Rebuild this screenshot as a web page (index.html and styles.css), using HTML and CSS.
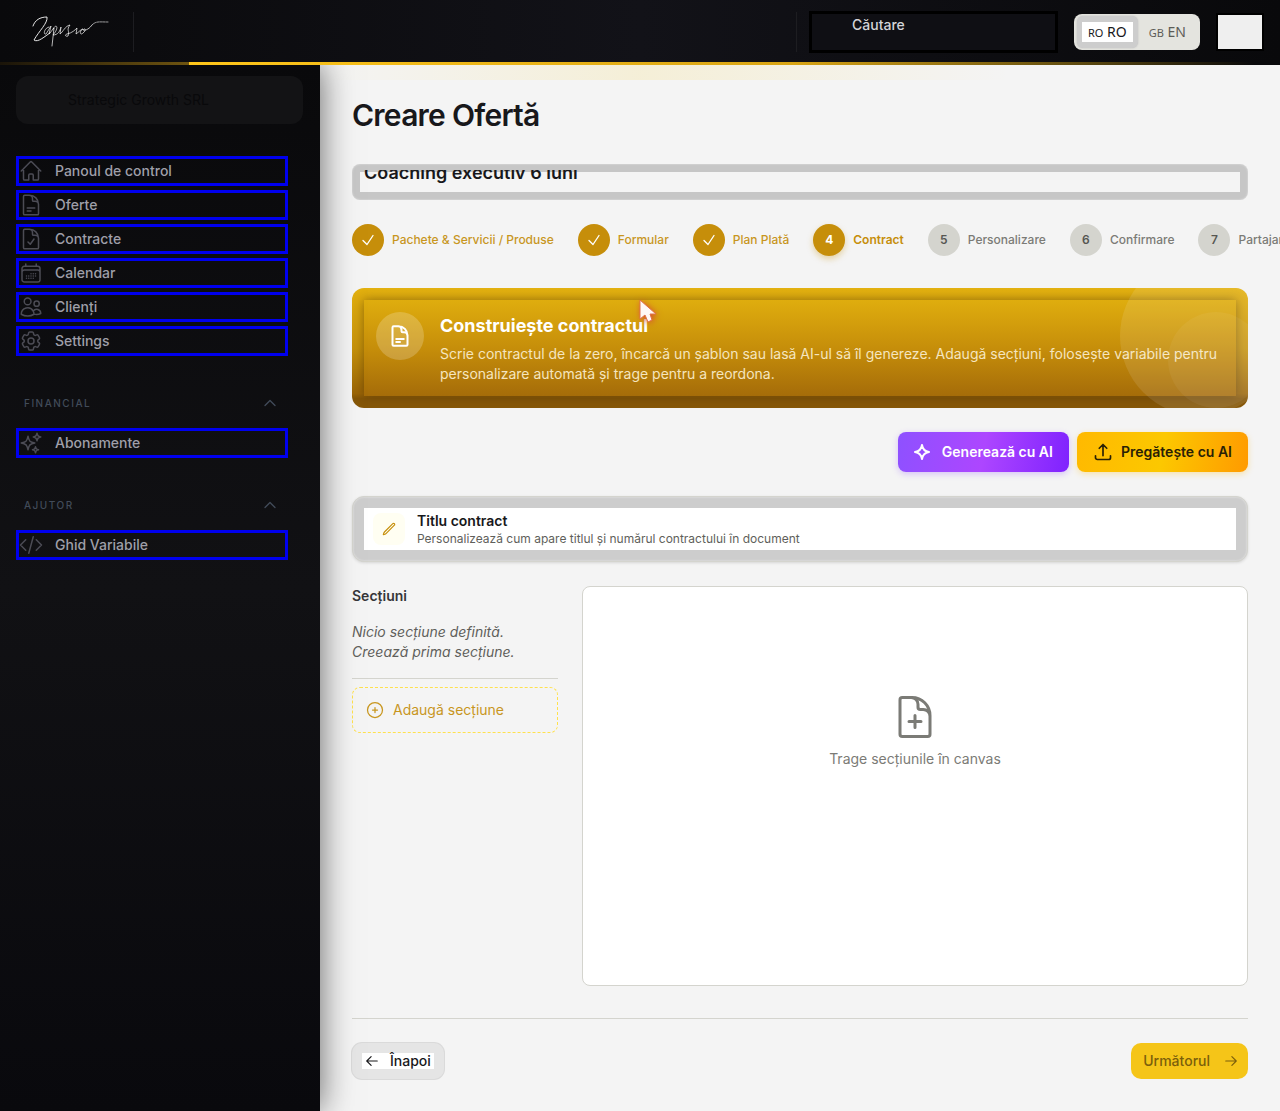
FILE: index.html
```html
<!DOCTYPE html>
<html lang="ro">
<head>
<meta charset="utf-8">
<meta name="viewport" content="width=device-width, initial-scale=1">
<title>Creare Ofertă</title>
<link rel="stylesheet" href="styles.css">
</head>
<body>
<header class="topbar">
  <a class="logo" href="#" aria-label="Zapisio">
    <svg width="80" height="36" viewBox="0 0 80 36" fill="none" stroke="#fff" stroke-linecap="round" stroke-linejoin="round"><path stroke-width=".9" d="M1 14C3 8 8 5 15 5C16 11 7 19 2 28C6 31 13 24 18 21"/><path stroke-width=".7" d="M17 15C12 16 11 23 14 22L19 14L17 22L22 16L20 34M21 17C24 11 28 15 21 23C26 23 28 19 29 15L28 22C31 20 33 14 38 13C34 18 38 19 36 24C34 25 32 23 35 22C40 21 43 18 45 16L44 22C47 20 49 17 51 17C47 19 48 24 51 21C54 19 54 15 51 18C54 19 58 16 60 13"/><path stroke-width=".6" stroke-dasharray="2 1" d="M60 13C64 9 67 10 76 10"/></svg>
  </a>
  <span class="rule"></span>
  <div class="tools">
    <span class="rule"></span>
    <button class="search" type="button">Căutare</button>
    <div class="langs">
      <button class="lang lang-on" type="button"><small>RO</small> RO</button>
      <button class="lang" type="button"><small>GB</small> EN</button>
    </div>
    <button class="account" type="button" aria-label="Cont"></button>
  </div>
</header>
<div class="shell">
  <aside class="sidebar">
    <div class="company">Strategic Growth SRL</div>
    <nav class="menu">
      <a href="#"><svg class="ico" viewBox="0 0 24 24"><path d="m2.25 12 8.954-8.955c.44-.439 1.152-.439 1.591 0L21.75 12M4.5 9.75v10.125c0 .621.504 1.125 1.125 1.125H9.75v-4.875c0-.621.504-1.125 1.125-1.125h2.25c.621 0 1.125.504 1.125 1.125V21h4.125c.621 0 1.125-.504 1.125-1.125V9.75"/></svg>Panoul de control</a>
      <a href="#"><svg class="ico" viewBox="0 0 24 24"><path d="M19.5 14.25v-2.625a3.375 3.375 0 0 0-3.375-3.375h-1.5A1.125 1.125 0 0 1 13.5 7.125v-1.5a3.375 3.375 0 0 0-3.375-3.375H8.25m0 12.75h7.5m-7.5 3H12M10.5 2.25H5.625c-.621 0-1.125.504-1.125 1.125v17.25c0 .621.504 1.125 1.125 1.125h12.75c.621 0 1.125-.504 1.125-1.125V11.25a9 9 0 0 0-9-9Z"/></svg>Oferte</a>
      <a href="#"><svg class="ico" viewBox="0 0 24 24"><path d="M10.125 2.25h-4.5c-.621 0-1.125.504-1.125 1.125v17.25c0 .621.504 1.125 1.125 1.125h12.75c.621 0 1.125-.504 1.125-1.125v-9M10.125 2.25h.375a9 9 0 0 1 9 9v.375M10.125 2.25A3.375 3.375 0 0 1 13.5 5.625v1.5c0 .621.504 1.125 1.125 1.125h1.5a3.375 3.375 0 0 1 3.375 3.375M9 15l2.25 2.25L15 12"/></svg>Contracte</a>
      <a href="#"><svg class="ico" viewBox="0 0 24 24"><path d="M6.75 3v2.25M17.25 3v2.25M3 18.75V7.5a2.25 2.25 0 0 1 2.25-2.25h13.5A2.25 2.25 0 0 1 21 7.5v11.25m-18 0A2.25 2.25 0 0 0 5.25 21h13.5A2.25 2.25 0 0 0 21 18.75m-18 0v-7.5A2.25 2.25 0 0 1 5.25 9h13.5A2.25 2.25 0 0 1 21 11.25v7.5m-9-6h.008v.008H12v-.008ZM12 15h.008v.008H12V15Zm0 2.25h.008v.008H12v-.008ZM9.75 15h.008v.008H9.75V15Zm0 2.25h.008v.008H9.75v-.008ZM7.5 15h.008v.008H7.5V15Zm0 2.25h.008v.008H7.5v-.008Zm6.75-4.5h.008v.008h-.008v-.008Zm0 2.25h.008v.008h-.008V15Zm0 2.25h.008v.008h-.008v-.008Zm2.25-4.5h.008v.008H16.5v-.008Zm0 2.25h.008v.008H16.5V15Z"/></svg>Calendar</a>
      <a href="#"><svg class="ico" viewBox="0 0 24 24"><path d="M15 19.128a9.38 9.38 0 0 0 2.625.372 9.337 9.337 0 0 0 4.121-.952 4.125 4.125 0 0 0-7.533-2.493M15 19.128v-.003c0-1.113-.285-2.16-.786-3.07M15 19.128v.106A12.318 12.318 0 0 1 8.624 21c-2.331 0-4.512-.645-6.374-1.766l-.001-.109a6.375 6.375 0 0 1 11.964-3.07M12 6.375a3.375 3.375 0 1 1-6.75 0 3.375 3.375 0 0 1 6.75 0Zm8.25 2.25a2.625 2.625 0 1 1-5.25 0 2.625 2.625 0 0 1 5.25 0Z"/></svg>Clienți</a>
      <a href="#"><svg class="ico" viewBox="0 0 24 24"><path d="M9.594 3.94c.09-.542.56-.94 1.11-.94h2.593c.55 0 1.02.398 1.11.94l.213 1.281c.063.374.313.686.645.87.074.04.147.083.22.127.325.196.72.257 1.075.124l1.217-.456a1.125 1.125 0 0 1 1.37.49l1.296 2.247a1.125 1.125 0 0 1-.26 1.431l-1.003.827c-.293.241-.438.613-.43.992a7.723 7.723 0 0 1 0 .255c-.008.378.137.75.43.991l1.004.827c.424.35.534.955.26 1.43l-1.298 2.247a1.125 1.125 0 0 1-1.369.491l-1.217-.456c-.355-.133-.75-.072-1.076.124a6.47 6.47 0 0 1-.22.128c-.331.183-.581.495-.644.869l-.213 1.281c-.09.543-.56.94-1.11.94h-2.594c-.55 0-1.019-.398-1.11-.94l-.213-1.281c-.062-.374-.312-.686-.644-.87a6.52 6.52 0 0 1-.22-.127c-.325-.196-.72-.257-1.076-.124l-1.217.456a1.125 1.125 0 0 1-1.369-.49l-1.297-2.247a1.125 1.125 0 0 1 .26-1.431l1.004-.827c.292-.24.437-.613.43-.991a6.932 6.932 0 0 1 0-.255c.007-.38-.138-.751-.43-.992l-1.004-.827a1.125 1.125 0 0 1-.26-1.43l1.297-2.247a1.125 1.125 0 0 1 1.37-.491l1.216.456c.356.133.751.072 1.076-.124.072-.044.146-.086.22-.128.332-.183.582-.495.644-.869l.214-1.28Z"/><path d="M15 12a3 3 0 1 1-6 0 3 3 0 0 1 6 0Z"/></svg>Settings</a>
    </nav>
    <button class="group" type="button">FINANCIAL<svg class="ico chev" viewBox="0 0 24 24"><path d="m4.5 15.75 7.5-7.5 7.5 7.5"/></svg></button>
    <nav class="menu">
      <a href="#"><svg class="ico" viewBox="0 0 24 24"><path d="M9.813 15.904 9 18.75l-.813-2.846a4.5 4.5 0 0 0-3.09-3.09L2.25 12l2.846-.813a4.5 4.5 0 0 0 3.09-3.09L9 5.25l.813 2.846a4.5 4.5 0 0 0 3.09 3.09L15.75 12l-2.846.813a4.5 4.5 0 0 0-3.09 3.09ZM18.259 8.715 18 9.75l-.259-1.035a3.375 3.375 0 0 0-2.455-2.456L14.25 6l1.036-.259a3.375 3.375 0 0 0 2.455-2.456L18 2.25l.259 1.035a3.375 3.375 0 0 0 2.456 2.456L21.75 6l-1.035.259a3.375 3.375 0 0 0-2.456 2.456ZM16.894 20.567 16.5 21.75l-.394-1.183a2.25 2.25 0 0 0-1.423-1.423L13.5 18.75l1.183-.394a2.25 2.25 0 0 0 1.423-1.423l.394-1.183.394 1.183a2.25 2.25 0 0 0 1.423 1.423l1.183.394-1.183.394a2.25 2.25 0 0 0-1.423 1.423Z"/></svg>Abonamente</a>
    </nav>
    <button class="group" type="button">AJUTOR<svg class="ico chev" viewBox="0 0 24 24"><path d="m4.5 15.75 7.5-7.5 7.5 7.5"/></svg></button>
    <nav class="menu">
      <a href="#"><svg class="ico" viewBox="0 0 24 24"><path d="M17.25 6.75 22.5 12l-5.25 5.25m-10.5 0L1.5 12l5.25-5.25m7.5-3-4.5 16.5"/></svg>Ghid Variabile</a>
    </nav>
  </aside>
  <main class="page">
    <h1>Creare Ofertă</h1>
    <div class="offer">
      <div class="offer-clip"><input type="text" aria-label="Numele ofertei" value="Coaching executiv 6 luni"></div>
    </div>
    <ol class="steps">
      <li class="done"><span class="dot"><svg class="ico" viewBox="0 0 24 24"><path d="m4.5 12.75 6 6 9-13.5"/></svg></span>Pachete &amp; Servicii / Produse</li>
      <li class="done"><span class="dot"><svg class="ico" viewBox="0 0 24 24"><path d="m4.5 12.75 6 6 9-13.5"/></svg></span>Formular</li>
      <li class="done"><span class="dot"><svg class="ico" viewBox="0 0 24 24"><path d="m4.5 12.75 6 6 9-13.5"/></svg></span>Plan Plată</li>
      <li class="done now"><span class="dot">4</span>Contract</li>
      <li><span class="dot">5</span>Personalizare</li>
      <li><span class="dot">6</span>Confirmare</li>
      <li><span class="dot">7</span>Partajare</li>
    </ol>
    <section class="banner">
      <div class="banner-in">
        <span class="badge"><svg class="ico" viewBox="0 0 24 24"><path d="M19.5 14.25v-2.625a3.375 3.375 0 0 0-3.375-3.375h-1.5A1.125 1.125 0 0 1 13.5 7.125v-1.5a3.375 3.375 0 0 0-3.375-3.375H8.25m0 12.75h7.5m-7.5 3H12M10.5 2.25H5.625c-.621 0-1.125.504-1.125 1.125v17.25c0 .621.504 1.125 1.125 1.125h12.75c.621 0 1.125-.504 1.125-1.125V11.25a9 9 0 0 0-9-9Z"/></svg></span>
        <div class="banner-text">
          <h2>Construiește contractul</h2>
          <p>Scrie contractul de la zero, încarcă un șablon sau lasă AI-ul să îl genereze. Adaugă secțiuni, folosește variabile pentru personalizare automată și trage pentru a reordona.</p>
        </div>
      </div>
      <svg class="pointer" width="18" height="26" viewBox="0 0 18 26"><path d="M0 0V19L5 15L8 22L12 20L10 14L16 14Z" fill="#fff8f5" stroke="#e0704c"/></svg>
    </section>
    <div class="actions">
      <button class="btn ai" type="button"><svg class="ico" viewBox="0 0 16 16"><path d="M8 1C8.600 5 11 7.400 15 8C11 8.600 8.600 11 8 15C7.400 11 5 8.600 1 8C5 7.400 7.400 5 8 1Z"/></svg>Generează cu AI</button>
      <button class="btn prep" type="button"><svg class="ico" viewBox="0 0 24 24"><path d="M3 16.5v2.25A2.25 2.25 0 0 0 5.25 21h13.5A2.25 2.25 0 0 0 21 18.750V16.5m-13.500-9L12 3m0 0 4.500 4.500M12 3v13.500"/></svg>Pregătește cu AI</button>
    </div>
    <button class="titlecard" type="button">
      <span class="titlecard-in">
        <span class="tile"><svg class="ico" viewBox="0 0 24 24"><path d="m16.862 4.487 1.687-1.688a1.875 1.875 0 1 1 2.652 2.652L6.832 19.820a4.500 4.500 0 0 1-1.897 1.130l-2.685.800.800-2.685a4.500 4.500 0 0 1 1.130-1.897L16.863 4.487Z"/></svg></span>
        <span class="lines"><strong>Titlu contract</strong><span>Personalizează cum apare titlul și numărul contractului în document</span></span>
      </span>
    </button>
    <div class="editor">
      <section class="sections">
        <h3>Secțiuni</h3>
        <p>Nicio secțiune definită. Creează prima secțiune.</p>
        <div class="add-row">
          <button class="add" type="button"><svg class="ico" viewBox="0 0 24 24"><path d="M12 9v6m3-3H9m12 0a9 9 0 1 1-18 0 9 9 0 0 1 18 0Z"/></svg>Adaugă secțiune</button>
        </div>
      </section>
      <section class="canvas">
        <svg class="ico" viewBox="0 0 24 24"><path d="M19.5 14.25v-2.625a3.375 3.375 0 0 0-3.375-3.375h-1.5A1.125 1.125 0 0 1 13.500 7.125v-1.500a3.375 3.375 0 0 0-3.375-3.375H8.250m3.750 9v6m3-3H9m1.500-12H5.625c-.621 0-1.125.504-1.125 1.125v17.250c0 .621.504 1.125 1.125 1.125h12.750c.621 0 1.125-.504 1.125-1.125V11.250a9 9 0 0 0-9-9Z"/></svg>
        <p>Trage secțiunile în canvas</p>
      </section>
    </div>
    <footer class="pager">
      <button class="back" type="button"><span><svg class="ico" viewBox="0 0 24 24"><path d="M10.5 19.5 3 12m0 0 7.500-7.500M3 12h18"/></svg>Înapoi</span></button>
      <button class="next" type="button">Următorul<svg class="ico" viewBox="0 0 24 24"><path d="M13.500 4.500 21 12m0 0-7.500 7.500M21 12H3"/></svg></button>
    </footer>
  </main>
</div>
</body>
</html>
```

FILE: styles.css
```css
* { box-sizing: border-box; }
body {
  margin: 0;
  min-height: 100vh;
  display: flex;
  flex-direction: column;
  overflow-x: hidden;
  background: #f4f4f4;
  color: #18181b;
  font: 14px/20px Inter, "Liberation Sans", sans-serif;
}
h1, h2, h3, p, ol { margin: 0; padding: 0; }
button { font: inherit; color: inherit; border: 0; cursor: pointer; }
.ico {
  width: 24px;
  height: 24px;
  flex: none;
  fill: none;
  stroke: currentColor;
  stroke-width: 1.5;
  stroke-linecap: round;
  stroke-linejoin: round;
}

/* Top bar */
.topbar {
  position: relative;
  z-index: 3;
  height: 64px;
  padding: 0 16px 0 32px;
  display: flex;
  align-items: center;
  background: linear-gradient(90deg, #09090b, #121218 50%, #09090b);
}
.topbar::before, .topbar::after {
  content: "";
  position: absolute;
  left: 0;
  right: 0;
}
.topbar::before {
  bottom: -1px;
  height: 3px;
  background:
    linear-gradient(90deg, #1a1409, #6e5410) 0 0 / 189px 100% no-repeat,
    linear-gradient(90deg, #ffc61a 189px, #d9a514 62%, #54430f 86%, #09090b 98%);
}
.topbar::after {
  top: 65px;
  height: 15px;
  background: linear-gradient(90deg, transparent 25%, rgba(250, 204, 21, .13) 50%, transparent 79%);
}
.logo { display: flex; margin: 0 21px 4px 0; }
.rule { width: 1px; height: 40px; background: #1d1d21; }
.tools { margin-left: auto; display: flex; align-items: center; }
.search {
  width: 249px;
  height: 42px;
  margin: 0 16px 0 12px;
  padding: 1px 40px;
  display: flex;
  align-items: flex-start;
  border: 3px solid #000;
  background: #0f0f14;
  color: #d4d4d8;
  font-weight: 500;
}
.langs {
  height: 36px;
  padding: 2px 3px;
  display: flex;
  align-items: center;
  border-radius: 8px;
  background: #e4e4df;
}
.lang {
  height: 32px;
  padding: 0 11px;
  border-radius: 6px;
  background: none;
  color: #5c5c57;
  font-family: "Noto Sans", sans-serif;
}
.lang small { font-size: 11px; }
.lang-on {
  color: #18181b;
  background: linear-gradient(#fff, #fff) center / calc(100% - 10px) 20px no-repeat, #cdcdcd;
  box-shadow: 0 0 2px #bbb;
}
.account {
  width: 48px;
  height: 38px;
  margin-left: 16px;
  border: 2px solid #000;
  background: #efefef;
}

.shell { flex: 1; display: flex; }

/* Sidebar */
.sidebar {
  position: relative;
  z-index: 2;
  width: 320px;
  flex: none;
  padding: 12px 32px 32px 16px;
  background: linear-gradient(#09090b, #111114 50%, #09090d);
  box-shadow: 0 0 32px rgba(0, 0, 0, .6);
}
.company {
  height: 48px;
  margin: 0 -15px 32px 0;
  padding: 14px 52px;
  border-radius: 12px;
  background: #131315;
  color: #09090b;
}
.menu { display: grid; gap: 4px; }
.menu a {
  height: 30px;
  display: flex;
  align-items: center;
  gap: 12px;
  border: 3px solid #00e;
  color: #9f9fa9;
  font-weight: 500;
  text-decoration: none;
}
.menu .ico { color: #4c4c55; }
.group {
  width: 100%;
  height: 20px;
  margin: 37px 0 15px;
  padding: 0 10px 0 8px;
  display: flex;
  align-items: center;
  justify-content: space-between;
  background: none;
  color: #414b59;
  font-size: 10px;
  font-weight: 500;
  letter-spacing: 1.5px;
}
.chev { width: 16px; height: 16px; stroke-width: 2; }

/* Page */
.page { flex: 1; min-width: 0; padding: 32px; }
h1 {
  padding-top: 2px;
  font-size: 30px;
  line-height: 34px;
  font-weight: 600;
  letter-spacing: -0.025em;
}
.offer {
  height: 36px;
  margin: 32px 0 24px;
  padding: 6px 12px;
  border-radius: 8px;
  background: linear-gradient(#f4f4f4, #f4f4f4) center / calc(100% - 16px) 20px no-repeat, #c6c6c6;
  box-shadow: inset 0 0 2px #e8e8e8;
}
.offer-clip { height: 17px; overflow: hidden; display: flex; align-items: flex-end; }
.offer input {
  flex: 1;
  height: 28px;
  padding: 0;
  border: 0;
  outline: 0;
  background: none;
  color: #18181b;
  font: 600 18px/28px Inter, sans-serif;
}
.steps {
  display: flex;
  gap: 24px;
  list-style: none;
  white-space: nowrap;
  font-size: 12px;
  font-weight: 500;
  color: #7b7b76;
}
.steps li { display: flex; align-items: center; gap: 8px; }
.dot {
  width: 32px;
  height: 32px;
  display: grid;
  place-items: center;
  border-radius: 50%;
  background: #d4d4ce;
  color: #565652;
  font-weight: 600;
}
.dot .ico { width: 16px; height: 16px; stroke-width: 2; }
.done { color: #c8961e; }
.done .dot { background: #c68e0a; color: #fff; }
.now { font-weight: 600; color: #c68e0a; }
.now .dot { font-weight: 700; box-shadow: 0 3px 6px rgba(198, 142, 10, .35); }

.banner {
  position: relative;
  margin: 32px 0 24px;
  padding: 12px;
  overflow: hidden;
  border-radius: 12px;
  background: linear-gradient(#e4b210, #c8940c 50%, #9c6608 88%, #865708 92%);
  color: #fff;
}
.banner::before, .banner::after {
  content: "";
  position: absolute;
  z-index: 1;
  border-radius: 50%;
}
.banner::before { width: 160px; height: 160px; top: -32px; right: -32px; background: rgba(255, 255, 255, .1); }
.banner::after { width: 96px; height: 96px; bottom: 0; right: -16px; background: rgba(255, 255, 255, .05); }
.banner-in {
  display: flex;
  gap: 16px;
  padding: 12px;
  background: linear-gradient(#dfad0e, #c68e0a 50%, #a56c09);
  box-shadow: 0 0 10px rgba(50, 30, 0, .45);
}
.badge {
  width: 48px;
  height: 48px;
  flex: none;
  display: grid;
  place-items: center;
  border-radius: 50%;
  background: rgba(255, 255, 255, .2);
}
.badge .ico { stroke-width: 2; }
.banner h2 { margin-bottom: 4px; font-size: 18px; line-height: 28px; font-weight: 700; }
.banner p { color: #f5e5bf; }
.pointer {
  position: absolute;
  z-index: 2;
  left: 288px;
  top: 12px;
  overflow: visible;
  filter: drop-shadow(1px 1px 3px #d4522c);
}

.actions { display: flex; justify-content: flex-end; gap: 8px; }
.btn {
  height: 40px;
  padding: 0 16px;
  display: flex;
  align-items: center;
  gap: 8px;
  border-radius: 8px;
  font-weight: 600;
}
.btn .ico { width: 20px; height: 20px; stroke-width: 2; }
.ai {
  gap: 12px;
  background: linear-gradient(100deg, #8e51ff, #ad46ff 50%, #7f22fe);
  color: #fff;
  box-shadow: 0 2px 6px rgba(142, 81, 255, .3);
}
.ai .ico { width: 16px; height: 16px; }
.prep {
  background: linear-gradient(100deg, #ffb900, #fcc800 50%, #ff9a00);
  color: #292106;
  box-shadow: 0 2px 6px rgba(255, 185, 0, .3);
}

.titlecard {
  width: 100%;
  margin: 24px 0;
  padding: 11px;
  display: block;
  border: 1px solid #d4d4ce;
  border-radius: 12px;
  background: #cdcdcd;
  box-shadow: inset 0 0 2px #eee, 0 1px 3px rgba(0, 0, 0, .12);
  text-align: left;
}
.titlecard-in { height: 42px; padding: 0 9px; display: flex; align-items: center; gap: 12px; background: #fff; }
.tile {
  width: 32px;
  height: 32px;
  display: grid;
  place-items: center;
  border-radius: 8px;
  background: #fffef2;
  color: #c68e0a;
}
.tile .ico { width: 14px; height: 14px; stroke-width: 2; }
.lines { display: grid; font-size: 12px; line-height: 16px; color: #5f5f5b; }
.lines strong { font-size: 14px; line-height: 20px; font-weight: 600; color: #18181b; }

.editor { display: grid; grid-template-columns: 206px 1fr; gap: 24px; }
.sections h3 { font-size: 14px; font-weight: 600; color: #363639; }
.sections p { margin: 16px 0; font-style: italic; color: #5f5f5b; }
.add-row { padding-top: 8px; border-top: 1px solid #d4d4ce; }
.add {
  width: 100%;
  height: 46px;
  padding: 0 12px;
  display: flex;
  align-items: center;
  gap: 8px;
  border: 1px dashed #ffe14d;
  border-radius: 8px;
  background: none;
  color: #c8961e;
}
.add .ico { width: 20px; height: 20px; }
.canvas {
  min-height: 400px;
  padding-top: 106px;
  display: flex;
  flex-direction: column;
  align-items: center;
  gap: 8px;
  border: 1px solid #d4d4ce;
  border-radius: 8px;
  background: #fff;
  color: #7b7b76;
}
.canvas .ico { width: 48px; height: 48px; }

.pager {
  margin-top: 32px;
  padding-top: 24px;
  display: flex;
  justify-content: space-between;
  border-top: 1px solid #d4d4ce;
}
.back, .next { height: 36px; border-radius: 10px; font-weight: 500; }
.back {
  padding: 0 10px;
  background: #e5e5e5;
  box-shadow: 0 0 0 1px #dadada;
}
.back span {
  height: 16px;
  padding: 0 3px;
  display: flex;
  align-items: center;
  gap: 11px;
  background: #fff;
}
.pager .ico { width: 14px; height: 14px; stroke-width: 2; }
.next {
  padding: 0 10px 0 12px;
  display: flex;
  align-items: center;
  gap: 14px;
  background: #f5c518;
  color: #7b5f0c;
}
```
